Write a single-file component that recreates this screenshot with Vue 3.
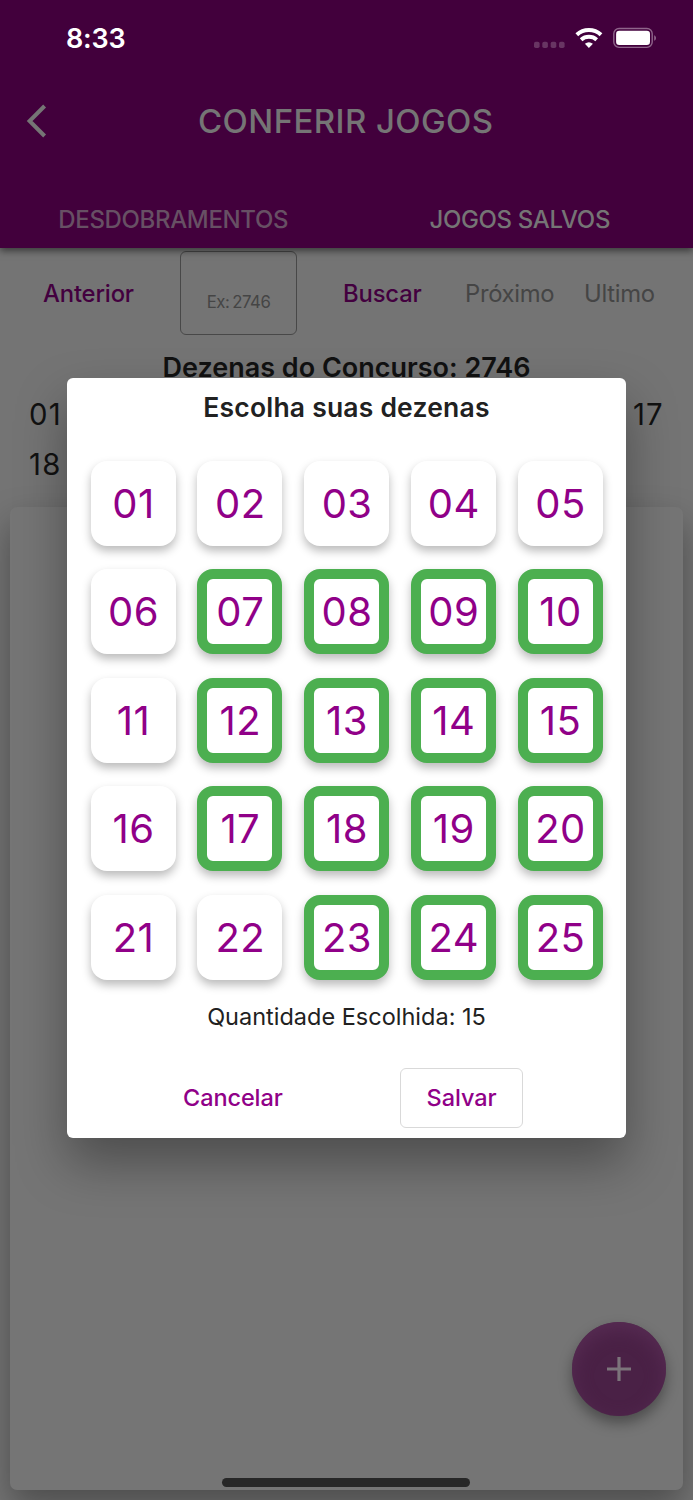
<script setup>
const selected = [7, 8, 9, 10, 12, 13, 14, 15, 17, 18, 19, 20, 23, 24, 25]
const numbers = Array.from({ length: 25 }, (_, i) => ({
  label: String(i + 1).padStart(2, '0'),
  on: selected.includes(i + 1),
}))
</script>

<template>
  <div class="screen">
    <header class="header">
      <div class="status">
        <span class="time">8:33</span>
        <svg class="indicators" width="126" height="26" viewBox="0 0 126 26">
          <g fill="#683563">
            <rect x="4" y="16.8" width="5.6" height="6.2" rx="1.8" />
            <rect x="12.3" y="16.8" width="5.6" height="6.2" rx="1.8" />
            <rect x="20.7" y="16.8" width="5.6" height="6.2" rx="1.8" />
            <rect x="29" y="16.8" width="5.6" height="6.2" rx="1.8" />
          </g>
          <g fill="none" stroke="#fff" stroke-width="4">
            <path d="M46.8 9.7C53.6 3.4 64.1 3.4 71 9.7" />
            <path d="M51.1 14.7C55.5 10.9 62.4 10.9 66.7 14.7" />
          </g>
          <path d="M54.9 18.8Q58.9 15.7 62.9 18.8L58.9 23Z" fill="#fff" />
          <rect x="83.8" y="3.5" width="38.4" height="18.9" rx="5.3" fill="none" stroke="#8f658b" stroke-width="1.4" />
          <rect x="86.1" y="5.8" width="33.9" height="14.2" rx="3.2" fill="#fff" />
          <path d="M124.2 10.2C126.6 11.2 126.6 14.8 124.2 15.8Z" fill="#8f658b" />
        </svg>
      </div>
      <div class="bar">
        <svg class="back" width="22" height="34" viewBox="0 0 22 34">
          <path d="M18.6 2L3.6 17L18.6 32" fill="none" stroke="#757575" stroke-width="4" />
        </svg>
        <h1 class="title">CONFERIR JOGOS</h1>
      </div>
      <nav class="tabs">
        <span class="tab dim">DESDOBRAMENTOS</span>
        <span class="tab">JOGOS SALVOS</span>
      </nav>
    </header>

    <main class="content">
      <div class="search">
        <span class="link anterior">Anterior</span>
        <span class="field">Ex: 2746</span>
        <span class="link buscar">Buscar</span>
        <span class="off proximo">Próximo</span>
        <span class="off ultimo">Ultimo</span>
      </div>
      <h2 class="contest">Dezenas do Concurso: 2746</h2>
      <div class="draw"><span>01</span><span>17</span></div>
      <div class="draw"><span>18</span></div>
      <section class="card"></section>
    </main>

    <button class="fab" aria-label="+">
      <svg width="24" height="24" viewBox="0 0 24 24">
        <path d="M12 0V24M0 12H24" stroke="#7c747b" stroke-width="3.2" />
      </svg>
    </button>
    <div class="home"></div>

    <div class="dialog">
      <h3 class="heading">Escolha suas dezenas</h3>
      <div class="grid">
        <button v-for="n in numbers" :key="n.label" class="num" :class="{ on: n.on }">{{ n.label }}</button>
      </div>
      <p class="count">Quantidade Escolhida: 15</p>
      <div class="actions">
        <button class="btn">Cancelar</button>
        <button class="btn outlined">Salvar</button>
      </div>
    </div>
  </div>
</template>

<style>
body { margin: 0; }
</style>

<style scoped>
.screen {
  position: relative;
  width: 693px;
  height: 1500px;
  overflow: hidden;
  display: flex;
  flex-direction: column;
  background: #747474;
  font-family: Inter, "Liberation Sans", sans-serif;
  white-space: nowrap;
}
h1, h2, h3, p { margin: 0; }
button { padding: 0; border: 0; font-family: inherit; white-space: nowrap; }
.header {
  position: relative;
  z-index: 1;
  height: 248px;
  flex: none;
  display: flex;
  flex-direction: column;
  background: #42003c;
  color: #757575;
  box-shadow: 0 3px 7px rgba(0, 0, 0, 0.5);
}
.status {
  display: flex;
  justify-content: space-between;
  align-items: center;
  height: 76px;
  padding: 0 37px 0 66px;
  color: #fff;
}
.time { font-size: 27px; font-weight: 600; letter-spacing: -0.2px; }
.bar { display: flex; align-items: center; height: 90px; padding-left: 26px; }
.title { margin-left: 150px; font-size: 33px; font-weight: 500; letter-spacing: 0.4px; }
.tabs { display: grid; grid-template-columns: 1fr 1fr; height: 82px; }
.tab { text-align: center; line-height: 107px; font-size: 24px; font-weight: 500; letter-spacing: -0.35px; }
.dim { color: #675064; }
.content { flex: 1; display: flex; flex-direction: column; }
.search { display: flex; align-items: center; height: 90px; font-size: 23.8px; letter-spacing: -0.15px; }
.link { color: #43003f; font-weight: 500; }
.off { color: #454545; letter-spacing: -0.3px; }
.anterior { width: 137px; padding-left: 43px; }
.field {
  box-sizing: border-box;
  width: 117px;
  height: 84px;
  border: 1.5px solid #484848;
  border-radius: 6px;
  text-align: center;
  line-height: 100px;
  font-size: 16.8px;
  letter-spacing: -0.5px;
  word-spacing: -1.2px;
  color: #454545;
}
.buscar { width: 121px; margin-left: 46px; }
.proximo { width: 119px; margin-left: 1px; }
.contest {
  height: 52px;
  line-height: 59px;
  text-align: center;
  font-size: 27px;
  font-weight: 600;
  letter-spacing: 0;
  color: #111;
}
.draw {
  display: flex;
  justify-content: space-between;
  height: 50px;
  padding: 0 29px;
  line-height: 50px;
  font-size: 29.3px;
  letter-spacing: 1.3px;
  color: #111;
}
.card {
  height: 983px;
  margin: 17px 10px 0;
  border-radius: 7px;
  background: #757575;
  box-shadow: 0 16px 34px rgba(0, 0, 0, 0.34);
}
.fab {
  position: absolute;
  left: 572px;
  top: 1322px;
  width: 94px;
  height: 94px;
  display: flex;
  align-items: center;
  justify-content: center;
  border-radius: 50%;
  background: #4a2146;
  box-shadow: 0 7px 14px rgba(0, 0, 0, 0.36), inset 0 7px 18px #572c53;
}
.home { position: absolute; left: 222px; top: 1478px; width: 248px; height: 8.5px; border-radius: 5px; background: #272727; }
.dialog {
  position: absolute;
  z-index: 2;
  left: 67px;
  top: 378px;
  width: 559px;
  height: 760px;
  border-radius: 6px;
  background: #fff;
  color: #212121;
  box-shadow: 0 25px 50px rgba(0, 0, 0, 0.34);
}
.heading { height: 82.5px; line-height: 59px; text-align: center; font-size: 26.5px; font-weight: 600; letter-spacing: 0.2px; }
.grid {
  display: grid;
  grid-template-columns: repeat(5, 85px);
  grid-auto-rows: 85px;
  gap: 23.5px 21.75px;
  margin-left: 23.5px;
}
.num {
  box-sizing: border-box;
  padding-left: 1px;
  border-radius: 16px;
  background: #fff;
  color: #900088;
  font-size: 40px;
  letter-spacing: 0.4px;
  box-shadow: 0 5px 10px rgba(0, 0, 0, 0.27);
}
.on { border: 10px solid #4caf50; }
.count { height: 87.5px; line-height: 74px; text-align: center; font-size: 23.5px; letter-spacing: 0; }
.actions { display: flex; align-items: center; height: 61px; padding-left: 116px; }
.btn { width: 217px; height: 60px; padding-bottom: 1px; text-align: left; background: none; color: #900088; font-size: 23.5px; font-weight: 500; letter-spacing: -0.1px; }
.outlined { box-sizing: border-box; width: 123px; text-align: center; border: 1.5px solid #d9d9d9; border-radius: 6px; }
</style>
